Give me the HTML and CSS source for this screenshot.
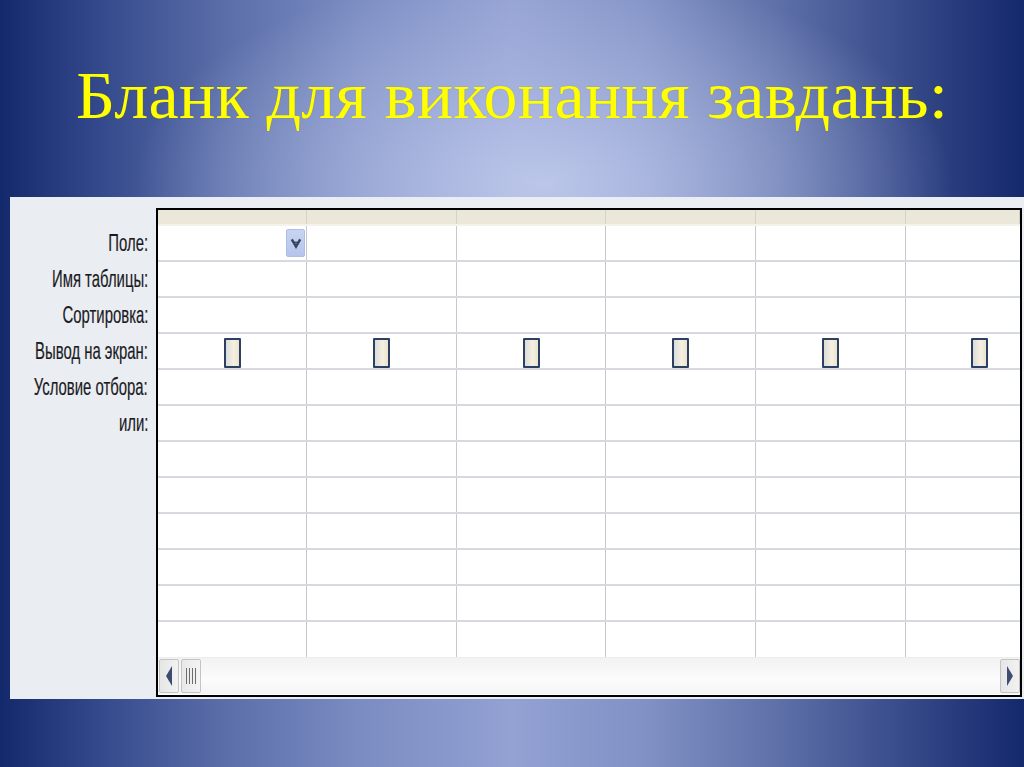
FILE: index.html
```html
<!DOCTYPE html>
<html lang="uk">
<head>
<meta charset="utf-8">
<title>Бланк для виконання завдань</title>
<link rel="stylesheet" href="styles.css">
</head>
<body>
<div class="slide">
  <h1 class="title">Бланк для виконання завдань:</h1>
  <div class="panel">
    <div class="labels">
      <div class="label"><span>Поле:</span></div>
      <div class="label"><span>Имя таблицы:</span></div>
      <div class="label"><span>Сортировка:</span></div>
      <div class="label"><span>Вывод на экран:</span></div>
      <div class="label"><span>Условие отбора:</span></div>
      <div class="label"><span>или:</span></div>
    </div>
    <div class="grid">
      <div class="row head"><div class="cell"></div><div class="cell"></div><div class="cell"></div><div class="cell"></div><div class="cell"></div><div class="cell"></div></div>
      <div class="row"><div class="cell sel"><span class="drop"><svg viewBox="0 0 10 10" width="12" height="12"><path d="M1.5 2 L5 8 L8.5 2" fill="none" stroke="#34465e" stroke-width="2"/><path d="M3 4.5 H7" stroke="#34465e" stroke-width="1.2"/></svg></span></div><div class="cell"></div><div class="cell"></div><div class="cell"></div><div class="cell"></div><div class="cell"></div></div>
      <div class="row"><div class="cell"></div><div class="cell"></div><div class="cell"></div><div class="cell"></div><div class="cell"></div><div class="cell"></div></div>
      <div class="row"><div class="cell"></div><div class="cell"></div><div class="cell"></div><div class="cell"></div><div class="cell"></div><div class="cell"></div></div>
      <div class="row"><div class="cell ck"><span class="box"></span></div><div class="cell ck"><span class="box"></span></div><div class="cell ck"><span class="box"></span></div><div class="cell ck"><span class="box"></span></div><div class="cell ck"><span class="box"></span></div><div class="cell ck last"><span class="box"></span></div></div>
      <div class="row"><div class="cell"></div><div class="cell"></div><div class="cell"></div><div class="cell"></div><div class="cell"></div><div class="cell"></div></div>
      <div class="row"><div class="cell"></div><div class="cell"></div><div class="cell"></div><div class="cell"></div><div class="cell"></div><div class="cell"></div></div>
      <div class="row"><div class="cell"></div><div class="cell"></div><div class="cell"></div><div class="cell"></div><div class="cell"></div><div class="cell"></div></div>
      <div class="row"><div class="cell"></div><div class="cell"></div><div class="cell"></div><div class="cell"></div><div class="cell"></div><div class="cell"></div></div>
      <div class="row"><div class="cell"></div><div class="cell"></div><div class="cell"></div><div class="cell"></div><div class="cell"></div><div class="cell"></div></div>
      <div class="row"><div class="cell"></div><div class="cell"></div><div class="cell"></div><div class="cell"></div><div class="cell"></div><div class="cell"></div></div>
      <div class="row"><div class="cell"></div><div class="cell"></div><div class="cell"></div><div class="cell"></div><div class="cell"></div><div class="cell"></div></div>
      <div class="row lastrow"><div class="cell"></div><div class="cell"></div><div class="cell"></div><div class="cell"></div><div class="cell"></div><div class="cell"></div></div>
      <div class="scroll">
        <span class="sbtn"><svg viewBox="0 0 8 20" width="8" height="20"><path d="M7 0 L1 10 L7 20 Z" fill="#3c4c70"/></svg></span>
        <span class="sthumb"><i></i><i></i><i></i><i></i></span>
        <span class="spacer"></span>
        <span class="sbtn"><svg viewBox="0 0 8 20" width="8" height="20"><path d="M1 0 L7 10 L1 20 Z" fill="#3c4c70"/></svg></span>
      </div>
    </div>
  </div>
</div>
</body>
</html>
```
FILE: styles.css
```css
html, body {
  margin: 0;
  padding: 0;
}
body {
  width: 1024px;
  height: 767px;
  overflow: hidden;
  background:
    radial-gradient(ellipse 40% 28% at 53% 24%, rgba(192, 202, 236, 0.9) 0%, rgba(180, 192, 230, 0.55) 45%, rgba(160, 174, 220, 0) 100%),
    linear-gradient(90deg, #14286c 0%, #354a8c 10%, #5b6ea9 22%, #7b8cc2 35%, #93a1d3 50%, #8191c5 63%, #5e70a8 76%, #354888 89%, #14286c 100%);
}
.slide {
  display: flex;
  flex-direction: column;
  height: 767px;
}
.title {
  margin: 0;
  height: 197px;
  box-sizing: border-box;
  padding-top: 57px;
  text-align: center;
  font-family: "Liberation Serif", "DejaVu Serif", serif;
  font-weight: normal;
  font-size: 68px;
  line-height: 76px;
  letter-spacing: 0.3px;
  color: #ffff00;
  text-shadow: 0 0 1px rgba(80, 80, 0, 0.4);
}
.panel {
  margin-left: 10px;
  width: 1014px;
  height: 502px;
  background: #eaedf2;
  display: flex;
  box-sizing: border-box;
  padding-top: 11px;
}
.labels {
  width: 146px;
  padding-top: 17px;
  display: flex;
  flex-direction: column;
}
.label {
  height: 36px;
  display: flex;
  align-items: center;
  justify-content: flex-end;
  padding-right: 8px;
}
.label span {
  font-family: "Liberation Sans", Arial, sans-serif;
  font-size: 24px;
  color: #1a1a1e;
  transform: scaleX(0.62);
  transform-origin: right center;
  white-space: nowrap;
  -webkit-text-stroke: 0.2px #1a1a1e;
}
.grid {
  width: 866px;
  height: 489px;
  box-sizing: border-box;
  border: 2px solid #000;
  background: #fff;
  display: flex;
  flex-direction: column;
}
.row {
  display: grid;
  grid-template-columns: 149px 150px 149px 150px 150px 1fr;
  height: 36px;
  border-bottom: 2px solid #d6dadf;
  box-sizing: border-box;
}
.row.head {
  height: 16px;
  background: #ece8d9;
  border-bottom: 2px solid #f4f2ea;
}
.row.lastrow {
  border-bottom: none;
  height: 35px;
}
.cell {
  border-right: 1px solid #c6c8cc;
  position: relative;
}
.row .cell:last-child {
  border-right: none;
}
.row.head .cell {
  border-right: 1px solid #d4d2c8;
}
.cell.sel {
  display: flex;
  justify-content: flex-end;
  align-items: center;
}
.drop {
  width: 19px;
  height: 28px;
  margin-right: 1px;
  box-sizing: border-box;
  border: 1px solid #aebde4;
  border-radius: 2px;
  background: linear-gradient(#c8d4f2, #b4c4ec);
  display: flex;
  align-items: center;
  justify-content: center;
}
.cell.ck {
  display: flex;
  justify-content: center;
  align-items: flex-end;
}
.cell.ck.last {
  justify-content: flex-end;
  padding-right: 32px;
}
.box {
  width: 17px;
  height: 30px;
  box-sizing: border-box;
  border: 2px solid #2c4064;
  border-radius: 1px;
  background: linear-gradient(90deg, #dcdcdc, #f6f0e0 60%, #ebe3cf);
}
.scroll {
  height: 37px;
  display: flex;
  align-items: stretch;
  padding: 1px 0 1px 1px;
  box-sizing: border-box;
  background: linear-gradient(#f2f2f2, #fcfcfc 60%, #f4f4f4);
  border-top: 1px solid #ededed;
}
.sbtn {
  width: 20px;
  box-sizing: border-box;
  border: 1px solid #c4c4c4;
  border-radius: 2px;
  background: linear-gradient(90deg, #e6e6e6, #f2f2f2);
  display: flex;
  align-items: center;
  justify-content: center;
}
.sthumb {
  width: 20px;
  margin-left: 2px;
  box-sizing: border-box;
  border: 1px solid #c4c4c4;
  border-radius: 2px;
  background: linear-gradient(90deg, #e8e8e8, #f4f4f4);
  display: flex;
  align-items: center;
  justify-content: center;
  gap: 2px;
}
.sthumb i {
  display: block;
  width: 1px;
  height: 16px;
  background: #6c6c6c;
}
.spacer {
  flex: 1;
}
```
